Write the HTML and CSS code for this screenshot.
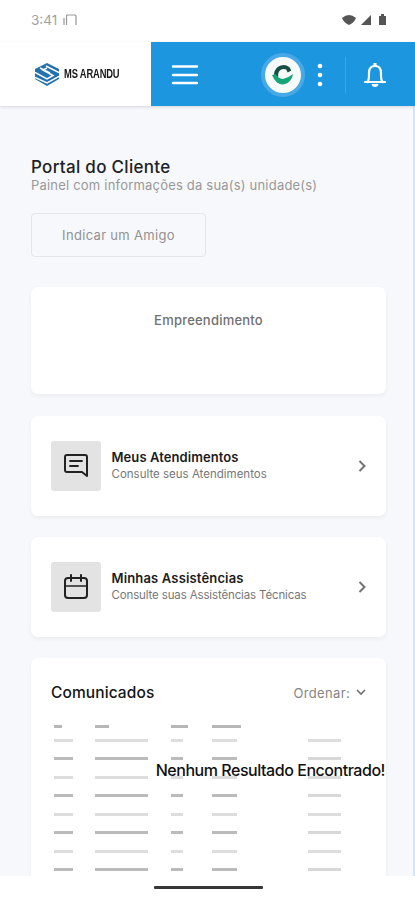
FILE: index.html
```html
<!DOCTYPE html>
<html lang="pt-BR">
<head>
<meta charset="utf-8">
<title>Portal do Cliente</title>
<link rel="stylesheet" href="styles.css">
</head>
<body>
<div class="phone">
  <div class="status">
    <div class="clock"><span>3:41</span><svg width="14" height="11" viewBox="0 0 14 11"><path d="M3.5 11V2Q3.5 1 4.5 1H12Q13 1 13 2V11M1 11V4" fill="none" stroke="#999" stroke-width="1.2"/></svg></div>
    <svg class="signals" width="46" height="12" viewBox="0 0 46 12" fill="#555"><path d="M0 4Q7-2 14 4Q12 9 7 11Q2 9 0 4Z"/><path d="M19 11L29 1V11Z"/><path d="M37 2H39V0H42V2H44V11H37Z"/></svg>
  </div>
  <header>
    <div class="brand">
      <svg width="24" height="23" viewBox="0 0 24 23"><path d="M12 0L24 6V16L12 23L0 16V6Z" fill="#2371ad"/><path d="M0 9.5L12 16L18 12.5L8 7L12 5M5 5L15 10M11 3L24 9.5M0 14.5L12 20L24 13.5" fill="none" stroke="#fff" stroke-width="1.5"/></svg>
      <span>MS ARANDU</span>
    </div>
    <div class="bar">
      <svg class="menu" width="28" height="20" viewBox="0 0 28 20"><path d="M2 1.5H26M2 10H26M2 18H26" stroke="#fff" stroke-width="2.4" stroke-linecap="round"/></svg>
      <div class="avatar"><svg width="22" height="22" viewBox="0 0 22 22" fill="none"><path d="M4.500 13Q3 8 7 4.500Q12 1.500 16 4.500L17.500 7.500" stroke="#174f45" stroke-width="4"/><path d="M0 11L3.500 10Q6 14.500 11 15Q16 14 21 10Q20 16 15.500 19Q10 22 5 18.500Q2 16 0 11Z" fill="#16a577"/></svg></div>
      <svg class="dots" width="6" height="24" viewBox="0 0 6 24" fill="#fff"><circle cx="3" cy="3" r="2.300"/><circle cx="3" cy="12" r="2.300"/><circle cx="3" cy="21" r="2.300"/></svg>
      <i class="rule"></i>
      <svg class="bell" width="24" height="26" viewBox="0 0 24 26"><path d="M2 20H22M4.500 20Q6 18 6 14V11Q6 4 12 4Q18 4 18 11V14Q18 18 19.500 20" fill="none" stroke="#fff" stroke-width="2.200" stroke-linecap="round"/><path d="M10.500 1H13.500V4H10.500ZM8.500 22H15.500Q15 25 12 25Q9 25 8.500 22Z" fill="#fff"/></svg>
    </div>
  </header>
  <main>
    <h1>Portal do Cliente</h1>
    <p class="sub">Painel com informações da sua(s) unidade(s)</p>
    <button>Indicar um Amigo</button>
    <section class="card project">Empreendimento</section>
    <section class="card link">
      <div class="tile"><svg width="26" height="26" viewBox="0 0 26 26" fill="none" stroke="#222" stroke-width="2" stroke-linejoin="round" stroke-linecap="round"><path d="M4 2H22Q24 2 24 4V23L19 19H4Q2 19 2 17V4Q2 2 4 2Z"/><path d="M7 8H19M7 13H15" stroke-width="1.800"/></svg></div>
      <div class="copy"><h2>Meus Atendimentos</h2><p>Consulte seus Atendimentos</p></div>
      <svg class="chev" width="8" height="12" viewBox="0 0 8 12"><path d="M1.500 1L6.500 6L1.500 11" fill="none" stroke="#747474" stroke-width="2"/></svg>
    </section>
    <section class="card link">
      <div class="tile"><svg width="26" height="26" viewBox="0 0 26 26" fill="none" stroke="#222" stroke-width="2" stroke-linecap="round"><rect x="2" y="4" width="22" height="20" rx="3"/><path d="M2 12H24" stroke-width="1.700"/><path d="M8 1V7M18 1V7"/></svg></div>
      <div class="copy"><h2 class="assist">Minhas Assistências</h2><p class="tech">Consulte suas Assistências Técnicas</p></div>
      <svg class="chev" width="8" height="12" viewBox="0 0 8 12"><path d="M1.500 1L6.500 6L1.500 11" fill="none" stroke="#747474" stroke-width="2"/></svg>
    </section>
    <section class="card news">
      <div class="newshead"><h3>Comunicados</h3><div class="order"><span>Ordenar:</span><svg width="10" height="7" viewBox="0 0 10 7"><path d="M1 1L5 5L9 1" fill="none" stroke="#707070" stroke-width="1.600"/></svg></div></div>
      <div class="table">
        <div class="row head"><i></i><i></i><i></i><i></i></div>
        <div class="row"><i></i><i></i><i></i><i></i><i></i></div>
        <div class="row dark"><i></i><i></i><i></i><i></i><i></i></div>
        <div class="row"><i></i><i></i><i></i><i></i><i></i></div>
        <div class="row dark"><i></i><i></i><i></i><i></i><i></i></div>
        <div class="row"><i></i><i></i><i></i><i></i><i></i></div>
        <div class="row dark"><i></i><i></i><i></i><i></i><i></i></div>
        <div class="row"><i></i><i></i><i></i><i></i><i></i></div>
        <div class="row dark"><i></i><i></i><i></i><i></i><i></i></div>
        <div class="empty">Nenhum Resultado Encontrado!</div>
      </div>
    </section>
  </main>
  <footer><i></i></footer>
</div>
</body>
</html>
```
FILE: styles.css
```css
* { box-sizing: border-box; margin: 0; }
body { background: #fff; font-family: Inter, "Liberation Sans", sans-serif; }
svg { display: block; flex: none; }
.phone { width: 415px; height: 900px; overflow: hidden; display: flex; flex-direction: column; }
.status { height: 42px; flex: none; display: flex; justify-content: space-between; padding: 14px 27px 0 31px; }
.clock { display: flex; gap: 6px; color: #a2a2a2; font: 13.500px/13px Inter, sans-serif; }
.clock span { width: 26px; white-space: nowrap; }
header { height: 64px; flex: none; display: flex; box-shadow: 0 1px 3px rgba(40, 45, 60, .16); position: relative; }
.brand { width: 151px; display: flex; align-items: center; padding-left: 35px; gap: 5px; font: bold 12px "Liberation Sans", sans-serif; color: #171717; }
.brand span { display: block; white-space: nowrap; transform: scaleX(.78); transform-origin: left; letter-spacing: -.2px; }
.bar { flex: 1; display: flex; align-items: center; background: #1b96df; padding: 2px 28px 0 20px; }
.avatar { width: 44px; height: 44px; border: 4px solid #48a9e6; border-radius: 50%; margin-left: 62px; background: #f6faf9; display: grid; place-items: center; }
.dots { margin-left: 12px; }
.rule { width: 1px; height: 36px; background: #3aa7e5; margin-left: 22px; }
.bell { margin-left: 17px; }
main { height: 770px; flex: none; overflow: hidden; background: #f7f8fb; border-right: 2px solid #d7e4f4; padding: 50px 27px 0 31px; }
h1 { font-size: 17px; line-height: 22px; font-weight: 500; color: #202124; white-space: nowrap; letter-spacing: .3px; }
.sub { font-size: 13px; line-height: 16px; color: #989898; white-space: nowrap; letter-spacing: .2px; margin-top: -1px; }
button { display: block; width: 175px; height: 44px; margin-top: 20px; padding: 0; border: 1px solid #e5e6e9; border-radius: 4px; background: transparent; font: 13px Inter, sans-serif; color: #929292; letter-spacing: .32px; }
.card { width: 355px; background: #fff; border-radius: 7px; box-shadow: 0 2px 4px rgba(40, 45, 60, .06); }
.project { height: 107px; margin-top: 30px; padding-top: 25px; text-align: center; font-size: 13px; line-height: 16px; font-weight: 500; color: #707070; letter-spacing: .22px; }
.link { height: 100px; margin-top: 21px; display: flex; align-items: center; padding: 0 20px; }
.project + .link { margin-top: 22px; }
.tile { width: 50px; height: 50px; background: #e3e3e3; border-radius: 3px; display: grid; place-items: center; }
.copy { flex: 1; padding-left: 10.500px; margin-top: -2px; white-space: nowrap; }
h2 { font-size: 13px; line-height: 18px; font-weight: 600; color: #1b1b1b; letter-spacing: .08px; }
h2.assist { letter-spacing: .16px; }
.copy p { font-size: 11.500px; line-height: 17px; color: #777; }
.copy .tech { letter-spacing: -.14px; }
.news { height: 250px; margin-top: 21px; padding: 24px 0 0 20px; }
.newshead { display: flex; justify-content: space-between; align-items: center; padding-right: 20px; height: 21px; }
h3 { font-size: 15.500px; font-weight: 500; color: #151515; letter-spacing: .1px; }
.order { display: flex; align-items: center; gap: 6px; color: #858585; font-size: 13px; letter-spacing: .35px; }
.table { position: relative; padding: 18px 0 0 3px; }
.row { height: 18.500px; display: grid; grid-template-columns: 41px 76px 41px 96px 33px; align-items: center; }
.row i { height: 3px; width: 19px; background: #ddd; filter: blur(.6px); }
.row i:nth-child(2) { width: 53px; }
.row i:nth-child(3) { width: 12px; }
.row i:nth-child(4) { width: 25px; }
.row i:nth-child(5) { width: 33px; background: #ddd; }
.row.dark i { background: #bbb; }
.row.dark i:nth-child(5) { background: #d8d8d8; }
.row.head { height: 10px; }
.row.head i { background: #b7b7b7; width: 8px; }
.row.head i:nth-child(2) { width: 14px; }
.row.head i:nth-child(3) { width: 17px; }
.row.head i:nth-child(4) { width: 29px; }
.empty { position: absolute; right: 1px; top: 56px; font-size: 16px; line-height: 22px; font-weight: 500; color: #111; white-space: nowrap; letter-spacing: -.46px; }
footer { flex: 1; display: flex; justify-content: center; padding: 10px 0 0 1px; }
footer i { width: 109px; height: 3px; border-radius: 1px; background: #363636; }
```
